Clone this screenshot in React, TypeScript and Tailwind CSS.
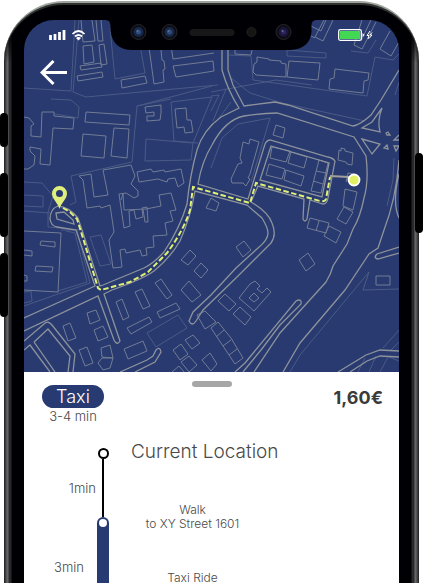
import React from "react";

const faintLines = [
  "M75 20L71 91L24 88", "M79 20L73 92L86 97L218 85", "M110 28L115 79L145 73L140 45",
  "M212 86L137 106L132 162L71 176L76 202L70 205", "M51 99L71 100L79 107L78 118L55 114",
  "M171 102L174 141L198 143M137 106L171 99M171 102L212 97", "M146 139L193 143L191 160L145 161Z",
  "M24 182L42 183L53 196L48 212L48 227L82 230", "M24 195L43 196L43 207L24 206", "M24 211L50 213",
  "M61 230L77 230L90 283L58 294L24 306M66 231L75 233L87 282L58 291", "M90 237L101 235L111 264L100 266Z",
  "M147 333L178 315L187 328L156 347Z", "M270 118L238 124L222 138L211 168M270 118L251 182",
  "M229 55L251 56L253 80L367 96L375 57L393 60L399 54", "M287 50L326 53L326 58L287 56Z",
  "M211 92L276 80L312 85M231 78L250 93L282 103L365 121", "M351 51L368 53L376 40",
  "M399 289L363 290L369 272L300 355L290 372", "M399 330L383 348M399 342L391 350M365 358L358 372M376 356L369 372M388 357L380 372M389 357L399 361",
  "M211 96L219 95L211 111M226 89L213 121M231 102L219 118", "M394 158L393 180L387 206M399 82L395 95",
  "M24 292L31 291L32 301L24 303M193 143L212 97",
];

const buildings = [
  "M81 20L83 42L95 41L92 20", "M96 20L98 41L103 41L101 20", "M83 46L92 45L94 62L84 64Z",
  "M99 45L104 44L107 64L101 65Z", "M80 66L101 63L102 67L81 70Z", "M77 76L102 72L103 77L78 81Z",
  "M121 80L145 76L147 83L122 88Z", "M148 40L154 84L164 82L163 70L165 69L164 61L162 60L160 40",
  "M171 45L173 59L214 53", "M173 66L213 61L214 71L176 77Z",
  "M54 112L42 112L41 137L31 136L31 126L34 124L29 118L24 117M54 112L54 116L74 118L73 129L53 128L50 165L40 164L41 149L30 147L30 151L35 156L34 165L28 169L24 169",
  "M86 112L130 115L129 125L85 122Z", "M83 134L106 136L104 158L81 156Z", "M114 128L129 129L127 158L111 156Z",
  "M145 107L161 105L161 113L160 120L147 121L147 116L154 116L154 112L146 113Z",
  "M175 109L186 108L187 120L191 120L193 132L185 133L184 127L177 128Z",
  "M79 176L91 174L94 197L108 195L103 170L131 165L135 176L131 184L138 191L138 196L134 198L126 193L119 194L124 228L130 226L129 211L134 210L136 219L143 217L142 208L147 207L148 222L145 222L143 209",
  "M79 176L83 180L87 208L100 206L101 208L110 205L114 232L109 240L113 268L122 267L120 250L125 249L126 253L140 250L142 256L147 255L146 248L154 247L153 236L167 235L165 223L173 221L170 211L176 210L171 193L159 195L161 206L146 209L124 210L123 194L121 200",
  "M137 172L151 169L153 172L164 170L165 172L181 169L184 183L178 187L175 178L168 179L167 182L158 179L139 182Z",
  "M24 231L61 233L58 292L24 290", "M41 241L55 242L55 247L40 245Z", "M36 266L53 267L52 272L35 271Z",
  "M24 250L32 251L32 256L24 255M24 275L27 276L27 281L24 281",
  "M63 326L70 323L76 338L68 341Z", "M87 313L96 310L100 320L90 324Z", "M94 330L103 326L108 337L98 341Z",
  "M79 350L87 347L93 363L85 366Z", "M101 348L110 345L113 358L102 357Z", "M102 358L113 358L110 368L103 370L98 363Z",
  "M116 302L122 299L129 317L123 320Z", "M135 292L142 289L150 306L143 309Z", "M155 283L161 279L172 295L167 299Z",
  "M127 328L149 317L152 322L131 334Z", "M157 312L176 303L180 309L160 318Z", "M124 349L143 341L147 351L128 359Z",
  "M181 290L189 281L201 295L192 302Z", "M181 260L190 250L196 256L188 265Z", "M194 271L201 263L208 270L201 278Z",
  "M197 315L205 311L216 322L205 329Z", "M185 340L193 335L200 343L192 349Z", "M173 350L181 344L188 354L180 360Z",
  "M181 362L189 356L197 365L189 372Z", "M202 360L210 353L217 364L211 371Z", "M172 372L179 366L184 372",
  "M276 125L285 128L283 138L273 135Z", "M341 148L345 149L345 151L353 153L352 165L347 164L346 162L338 160L339 150L341 151Z",
  "M250 139L259 142L250 174L248 178L250 179L246 186L243 183L232 183L231 179L238 164L242 163L240 158L243 142L249 144Z",
  "M272 147L290 151L286 162L270 158Z", "M291 152L307 157L304 168L288 163Z", "M269 164L285 169L282 179L266 175Z",
  "M286 170L304 176L301 186L284 180Z", "M319 160L328 163L321 193L311 191ZM316 171L326 173M313 181L323 184",
  "M345 189L357 192L353 210L343 206Z", "M344 207L353 212L346 224L337 219Z", "M310 218L329 223L326 233L307 228ZM319 221L316 231",
  "M329 226L341 232L336 243L324 236Z", "M206 208L211 198L219 203L216 211Z", "M346 182L348 173L354 174",
  "M236 247L244 241L251 250L243 257Z", "M299 260L308 253L315 264L306 271Z",
  "M239 298L250 284L255 281L260 286L257 289L262 293L267 288L271 292L254 311Z", "M254 293L259 298L254 302L249 298Z",
  "M218 301L225 294L236 304L229 311Z", "M233 314L240 307L251 317L245 325Z",
  "M211 328L218 322L231 338L243 358L235 364L223 346ZM216 337L224 330M223 346L231 340M229 355L237 349",
  "M376 276L390 276L390 285L376 285Z",
  "M257 57L269 59L269 60L281 61L281 63L286 64L286 77L256 75L253 72L254 64L257 62Z",
  "M289 61L320 63L318 80L287 77Z", "M335 69L369 73L368 80L364 81L363 93L329 89L330 79L334 78Z",
  "M324 20L315 37L323 41L333 20M311 26L321 31L326 20M311 36L315 38", "M362 20L354 45L362 49L376 22M371 20L361 41",
  "M390 31L380 49L391 56L399 42", "M235 50L235 54L251 55L252 50",
];

const roads = [
  "M222 45L222 70Q228 91 239 108L221 117Q203 130 197 150Q190 175 187 204Q180 228 164 252Q154 263 144 268L103 285L100 286L83 233L78 218Q69 207 58 206Q50 209 50 219Q51 226 57 227L76 230L95 286L24 318",
  "M228 45L228 70L233 85L244 106L275 102L288 105L353 126Q360 125 371 115L381 100L399 70",
  "M24 331L98 296L114 340Q117 346 120 341L104 294L112 290Q143 279 154 271Q170 258 180 241Q191 216 195 191L247 205L262 218Q268 228 268 233Q268 240 258 248L236 268L211 295L193 312L189 321Q192 327 196 321L203 310L238 276L271 243Q277 235 272 223Q268 212 251 202L258 186L304 199L303 219Q305 223 307 219L310 200L323 204Q327 204 328 198L335 161Q333 158 328 157L270 140Q267 140 265 144L248 199L198 184Q202 161 212 145Q225 120 244 116Q262 113 277 113L354 137L366 156Q369 181 364 198Q360 218 353 229L347 244L333 266Q331 274 326 282L280 333L254 372",
  "M271 146L329 163L322 197L260 180Z",
  "M56 213L64 212L73 220L74 224L57 219Z",
  "M24 341L44 324Q48 320 52 325L75 354L73 372M34 342L48 329L70 356L68 372M34 342L55 372M24 350L30 345L50 372",
  "M120 372L147 360L153 356L156 350Q160 346 161 352L155 362L135 372",
  "M235 372L245 363L296 301Q302 298 301 304L280 325L261 350L243 372",
  "M283 372L300 343L345 290L369 254L378 248L384 230Q396 199 399 160M399 174Q392 203 399 218",
  "M399 247L377 254Q373 258 378 259L399 253", "M338 372L366 355L380 350L399 351M350 372L367 361L380 356L399 357",
  "M382 108L372 122L362 128L380 132Q377 121 382 108Z", "M362 139L380 144L372 154Z",
  "M386 133L388 132L390 135L387 135ZM384 148L387 145L388 149ZM399 135L394 140L399 140M394 146L396 151L399 146Z",
];

function CityMap() {
  return (
    <svg
      className="absolute inset-0 h-full w-full"
      viewBox="24 20 375 352"
      preserveAspectRatio="xMidYMid slice"
      fill="none"
      role="img"
      aria-label="Route map"
    >
      <g stroke="#4b5a85" strokeWidth="1">
        {faintLines.map((d) => <path key={d} d={d} />)}
      </g>
      <g stroke="#727c94" strokeWidth="1">
        {buildings.map((d) => <path key={d} d={d} />)}
      </g>
      <g stroke="#8d929b" strokeWidth="1.3">
        {roads.map((d) => <path key={d} d={d} />)}
      </g>
      <path d="M330 176L349 177" stroke="#a3a09b" strokeWidth="2" />
      <path
        d="M63 208L70 212L77 219L83 238L98 288L101 290L130 282L148 272L167 253Q184 230 190 210L193 187L250 203L256 183L320 201Q325 202 326 199L330 177"
        stroke="#e0f076"
        strokeWidth="2"
        strokeDasharray="5.500 2.500"
      />
      <path
        fillRule="evenodd"
        d="M59.500 209C58 203 52 199 52 193.500A7.500 7.500 0 0 1 67 193.500C67 199 61 203 59.500 209ZM59.500 190A3.500 3.500 0 1 0 59.500 197A3.500 3.500 0 1 0 59.500 190Z"
        fill="#e0ee7b"
      />
      <circle cx="354" cy="180" r="5.500" fill="#e1ef62" stroke="white" strokeWidth="1.800" />
    </svg>
  );
}

function Notch() {
  return (
    <svg className="absolute left-1/2 top-0 -translate-x-1/2" width="213" height="31" viewBox="105 20 213 31" aria-hidden="true">
      <path d="M105 19V20Q110 20 110 26V30Q112 50 132 50H290Q309 49 311 32V25Q311 20 317 20V19Z" fill="#000004" />
      {[138, 169, 283].map((x) => (
        <g key={x}>
          <circle cx={x} cy="32" r="7.500" fill="#0d0e13" stroke="#24262b" />
          <circle cx={x} cy="32" r="5" fill={x === 283 ? "#1b153b" : "#17284b"} />
          <circle cx={x} cy="32" r="2.500" fill={x === 283 ? "#30245d" : "#304c78"} />
          <circle cx={x - 1} cy="31" r="1" fill="#5c7191" />
        </g>
      ))}
      <rect x="189" y="29" width="45" height="7" rx="3.500" fill="#171717" />
      <circle cx="251" cy="32" r="4.500" fill="#151515" stroke="#222" />
    </svg>
  );
}

function StatusBar() {
  return (
    <div className="relative flex h-[30px] items-center justify-between px-6">
      <svg width="38" height="12" viewBox="48 29 38 12" fill="none" aria-label="Signal and Wi-Fi">
        <path d="M50.500 35V40M55 34V40M59.500 32V40M64 30V40" stroke="white" strokeWidth="2.800" />
        <path d="M72.500 34Q78.500 28 84.500 34M75 36.500Q78.500 33.500 82 36.500" stroke="white" strokeWidth="1.700" />
        <path d="M76 38Q78.500 36 81 38L78.500 40.500Z" fill="white" />
      </svg>
      <svg width="37" height="12" viewBox="338 29 37 12" fill="none" aria-label="Battery charging">
        <rect x="338.700" y="29.700" width="22.600" height="10.600" rx="1.500" stroke="white" strokeWidth="1.300" />
        <rect x="340" y="31" width="20" height="8" fill="#43d854" />
        <path d="M362.500 33V37L364.500 35Z" fill="white" />
        <path d="M370 31L367 35.500H369L368 39M372 32.500L370 35H372L369 38.500" stroke="white" />
      </svg>
    </div>
  );
}

function BackButton() {
  return (
    <button type="button" aria-label="Back" className="relative ml-4 mt-2.5 block cursor-pointer">
      <svg width="28" height="26" viewBox="40 60 28 26" fill="none" stroke="white" strokeWidth="3">
        <path d="M67 72.500H43M53.500 61L42 72.500L53.500 84" />
      </svg>
    </button>
  );
}

function TripDetails() {
  return (
    <section className="relative flex flex-1 flex-col bg-white text-[#494949]">
      <button type="button" aria-label="Expand trip details" className="mx-auto mt-[9px] h-1.5 w-10 shrink-0 rounded-full bg-[#a6a6a6]" />
      <header className="-mt-0.5 flex items-start justify-between px-4">
        <div className="ml-0.5 w-[62px] text-center">
          <h1 className="rounded-full bg-[#283a72] text-lg font-light leading-[23px] text-white">Taxi</h1>
          <p className="whitespace-nowrap text-[13px] leading-4">3-4 min</p>
        </div>
        <strong className="mt-0.5 text-lg font-bold leading-[22px] text-[#3b3b3b]">1,60€</strong>
      </header>
      <div className="mt-4 flex flex-1 pl-7 text-[13px]">
        <div className="flex w-11 flex-col leading-4">
          <span className="mt-10 self-end">1min</span>
          <span className="mt-[63px] ml-0.5">3min</span>
        </div>
        <div className="ml-px flex w-3 flex-col items-center pt-2">
          <span className="h-[11px] w-[11px] shrink-0 rounded-full border-2 border-black" />
          <span className="h-[58px] w-0.5 shrink-0 bg-black" />
          <span className="flex w-3 flex-1 justify-center rounded-t-full bg-[#283a72] pt-0.5">
            <span className="h-2 w-2 rounded-full bg-white" />
          </span>
        </div>
        <div className="ml-[22px]">
          <h2 className="whitespace-nowrap text-[19px] font-light leading-6">Current Location</h2>
          <div className="w-[123px] text-center text-xs leading-[14px]">
            <p className="mt-[39px] whitespace-nowrap">Walk<br />to XY Street 1601</p>
            <p className="mt-10">Taxi Ride</p>
          </div>
        </div>
      </div>
    </section>
  );
}

export default function App() {
  return (
    <main className="relative h-screen overflow-hidden bg-white px-1 pt-px font-['Inter','Liberation_Sans',sans-serif] font-light">
      <div className="h-full overflow-hidden rounded-t-[60px] border-t-2 border-t-[#9da39d] bg-[linear-gradient(180deg,#000004_0,#000004_28px,transparent_60px),linear-gradient(90deg,#1c1c1e_0,#4c4c4f_2px,#6e6e70_4px,#29292b_5px,#29292b_7px,#000004_8px,#000004_calc(100%-8px),#29292b_calc(100%-7px),#29292b_calc(100%-5px),#6e6e70_calc(100%-4px),#4c4c4f_calc(100%-2px),#1c1c1e_100%)] px-5 shadow-[inset_0_2px_0_#2f312f]">
        <div className="mt-[17px] flex h-full flex-col overflow-hidden rounded-t-[30px]">
          <section className="relative h-[352px] shrink-0 overflow-hidden bg-[#283a70]">
            <CityMap />
            <Notch />
            <StatusBar />
            <BackButton />
          </section>
          <TripDetails />
        </div>
      </div>
      <div className="absolute left-0 top-[113px] h-[34px] w-2 rounded-sm bg-black" />
      <div className="absolute left-0 top-[173px] h-16 w-2 rounded-sm bg-black" />
      <div className="absolute left-0 top-[253px] h-16 w-2 rounded-sm bg-black" />
      <div className="absolute right-0 top-[153px] h-20 w-2 rounded-sm bg-black" />
    </main>
  );
}
